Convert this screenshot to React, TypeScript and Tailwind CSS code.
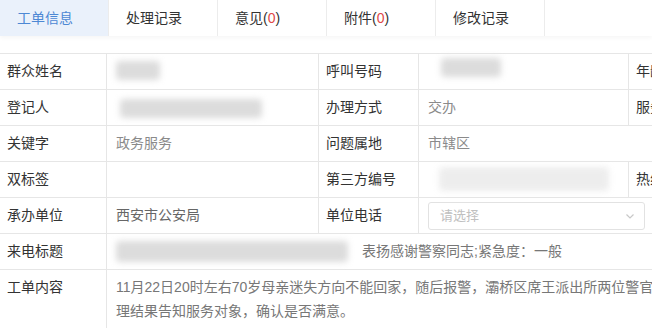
const font = { fontFamily: '"Liberation Sans", "Noto Sans CJK SC", sans-serif' };

const tabs = [
  { label: "工单信息" },
  { label: "处理记录" },
  { label: "意见", count: 0 },
  { label: "附件", count: 0 },
  { label: "修改记录" },
];

const Blob = ({ className }: { className: string }) => (
  <div className={`absolute rounded bg-[#dcdcdc] blur-[3px] ${className}`} />
);

const Label = ({ children, last }: { children?: React.ReactNode; last?: boolean }) => (
  <div className={`flex h-9 items-center border-b border-[#e6e6e6] pl-[7px] text-[14px] text-[#333] ${last ? "" : "border-r"}`}>
    {children}
  </div>
);

const Value = ({ children, className = "" }: { children?: React.ReactNode; className?: string }) => (
  <div className={`relative flex h-9 items-center border-b border-r border-[#e6e6e6] pl-[9px] text-[14px] text-[#8a8a8a] ${className}`}>
    {children}
  </div>
);

export default function App() {
  return (
    <div className="h-[328px] w-[652px] overflow-hidden bg-white" style={font}>
      {/* tabs */}
      <div className="flex h-9 shadow-[0_2px_4px_rgba(0,0,0,0.04)]">
        {tabs.map((t, i) => (
          <div
            key={t.label}
            className={`flex w-[109px] shrink-0 items-center border-r border-[#ececec] text-[14px] ${
              i === 0 ? "bg-[#eaf1fb] pl-[17px] text-[#4d88d4]" : "pl-[17px] text-[#333]"
            }`}
          >
            {t.label}
            {t.count !== undefined && (
              <>
                (<span className="text-[#e04848]">{t.count}</span>)
              </>
            )}
          </div>
        ))}
      </div>

      {/* table */}
      <div className="mt-[17px] grid w-[760px] grid-cols-[107px_212px_100px_210px_131px] border-t border-[#e6e6e6]">
        {/* row 1 */}
        <Label>群众姓名</Label>
        <Value>
          <Blob className="left-[9px] top-[7px] h-[19px] w-[44px]" />
        </Value>
        <Label>呼叫号码</Label>
        <Value>
          <Blob className="left-[22px] top-[4px] h-[19px] w-[60px]" />
        </Value>
        <Label last>年龄</Label>

        {/* row 2 */}
        <Label>登记人</Label>
        <Value>
          <Blob className="left-[13px] top-[9px] h-[19px] w-[142px]" />
        </Value>
        <Label>办理方式</Label>
        <Value>交办</Value>
        <Label last>服务类型</Label>

        {/* row 3 */}
        <Label>关键字</Label>
        <Value>政务服务</Value>
        <Label>问题属地</Label>
        <Value className="col-span-2 border-r-0">市辖区</Value>

        {/* row 4 */}
        <Label>双标签</Label>
        <Value />
        <Label>第三方编号</Label>
        <Value>
          <Blob className="left-[20px] top-[5px] h-[24px] w-[170px] opacity-50" />
        </Value>
        <Label last>热线号码</Label>

        {/* row 5 */}
        <Label>承办单位</Label>
        <Value className="text-[#666]">西安市公安局</Value>
        <Label>单位电话</Label>
        <div className="col-span-2 flex h-9 items-center border-b border-[#e6e6e6] pl-[9px]">
          <div className="flex h-[28px] w-[217px] items-center justify-between rounded-[3px] border border-[#e2e2e2] pl-[11px] pr-[8px] text-[13px] text-[#c0c0c0]">
            <span>请选择</span>
            <svg width="12" height="12" viewBox="0 0 12 12" fill="none" stroke="#c8c8c8" strokeWidth="1.2">
              <path d="M2.5 4.5 6 8l3.5-3.5" />
            </svg>
          </div>
        </div>

        {/* row 6 */}
        <Label>来电标题</Label>
        <div className="relative col-span-4 flex h-9 items-center border-b border-[#e6e6e6] pl-[255px] text-[14px] text-[#777]">
          <Blob className="left-[9px] top-[7px] h-[21px] w-[232px]" />
          表扬感谢警察同志;紧急度：一般
        </div>

        {/* row 7 */}
        <div className="h-[60px] border-r border-[#e6e6e6] pl-[7px] pt-[5px] text-[14px] leading-[24px] text-[#333]">
          工单内容
        </div>
        <div className="col-span-4 pl-[9px] pt-[5px] text-[14px] leading-[24px] text-[#777]">
          <div className="whitespace-nowrap">
            11月22日20时左右70岁母亲迷失方向不能回家，随后报警，灞桥区席王派出所两位警官帮助母亲回家，
          </div>
          <div className="whitespace-nowrap">理结果告知服务对象，确认是否满意。</div>
        </div>
      </div>
    </div>
  );
}
